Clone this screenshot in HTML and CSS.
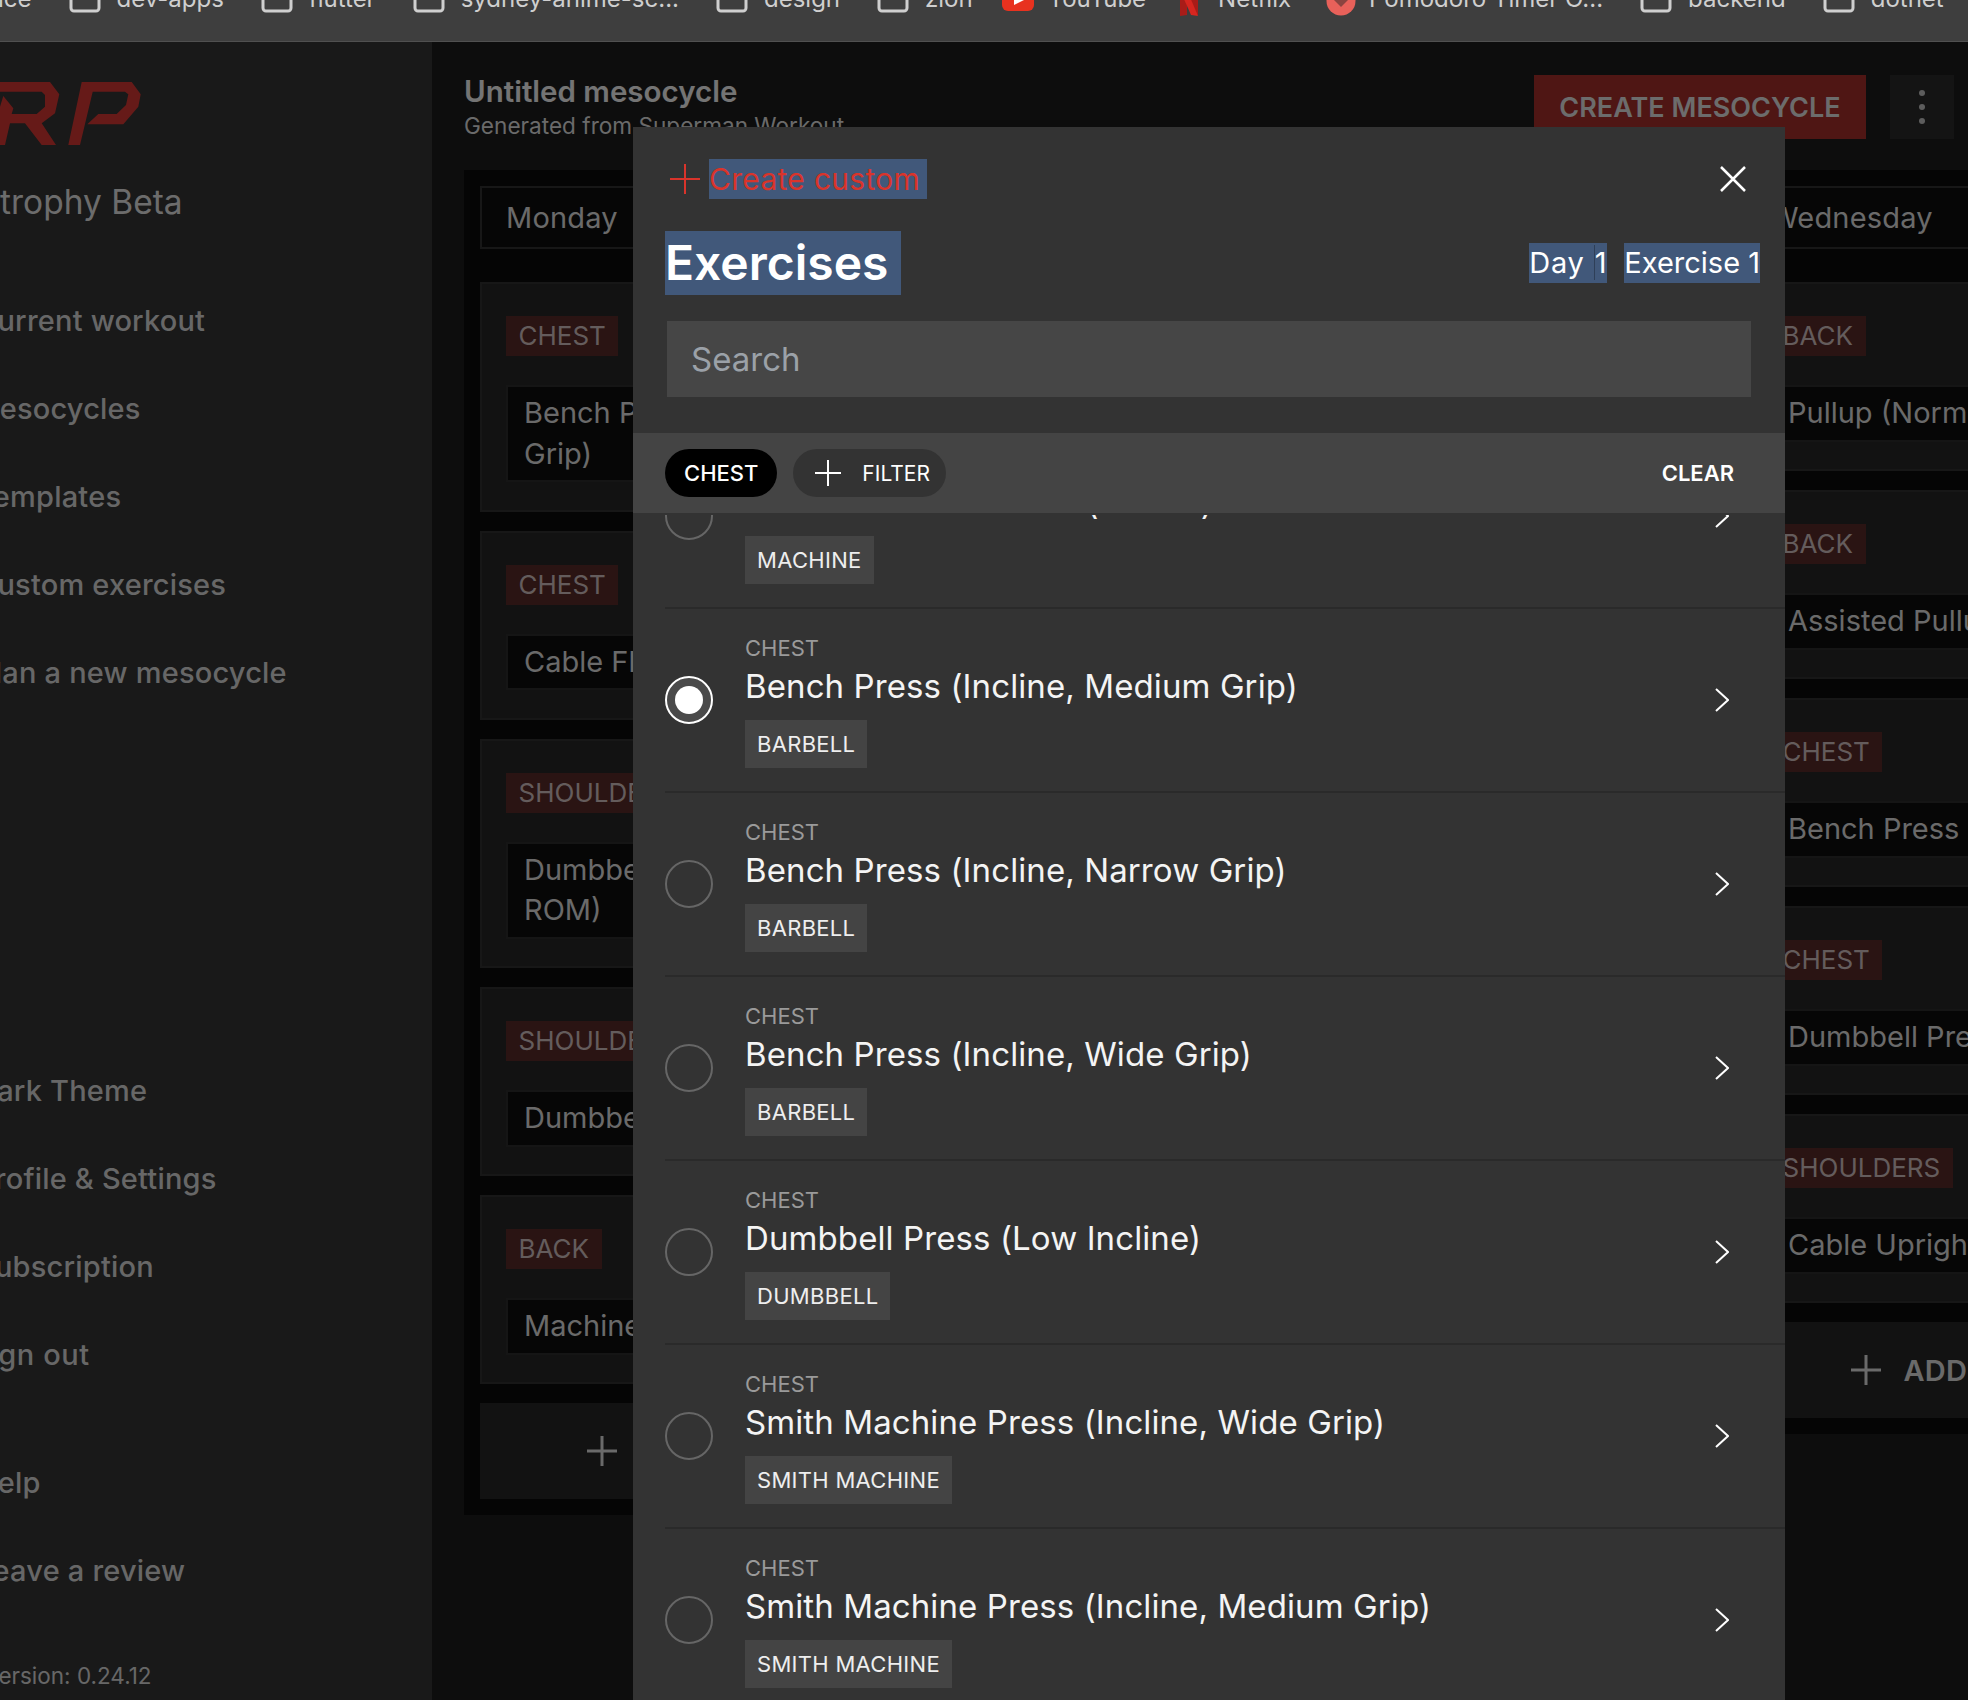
FILE: index.html
```html
<!DOCTYPE html>
<html lang="en">
<head>
  <meta charset="UTF-8" />
  <title>RP Hypertrophy Beta</title>
  <link rel="stylesheet" href="styles.css">
</head>
<body>

  <div class="bookmarks">
    <span class="bm-text bm-first">ice</span>
    <span class="bm"><svg class="folder" viewBox="0 0 32 26"><rect x="2" y="-6" width="28" height="30" rx="3"/></svg><span class="bm-text">dev-apps</span></span>
    <span class="bm"><svg class="folder" viewBox="0 0 32 26"><rect x="2" y="-6" width="28" height="30" rx="3"/></svg><span class="bm-text">flutter</span></span>
    <span class="bm"><svg class="folder" viewBox="0 0 32 26"><rect x="2" y="-6" width="28" height="30" rx="3"/></svg><span class="bm-text">sydney-anime-sc...</span></span>
    <span class="bm"><svg class="folder" viewBox="0 0 32 26"><rect x="2" y="-6" width="28" height="30" rx="3"/></svg><span class="bm-text">design</span></span>
    <span class="bm"><svg class="folder" viewBox="0 0 32 26"><rect x="2" y="-6" width="28" height="30" rx="3"/></svg><span class="bm-text">zion</span></span>
    <span class="bm bm-yt"><svg class="favicon" viewBox="0 0 32 26"><rect width="32" height="25" rx="6" fill="#e8321f"/><path d="M12 4 L24 13 L12 19 Z" fill="#fff"/></svg><span class="bm-text">YouTube</span></span>
    <span class="bm bm-netflix"><svg class="favicon-n" viewBox="0 0 18 26"><path d="M0 0 H7 V25 L0 26 Z" fill="#a81c18"/><path d="M11 0 H18 V25 L11 24 Z" fill="#a81c18"/><path d="M0 0 H7 L18 26 L11 25 Z" fill="#d6261f"/></svg><span class="bm-text">Netflix</span></span>
    <span class="bm bm-pomo"><svg class="favicon-p" viewBox="0 0 30 26"><circle cx="15" cy="11" r="14.5" fill="#e8615a"/><path d="M8 10 L15 17 L22 10 Z" fill="#8a4440"/></svg><span class="bm-text">Pomodoro Timer O...</span></span>
    <span class="bm"><svg class="folder" viewBox="0 0 32 26"><rect x="2" y="-6" width="28" height="30" rx="3"/></svg><span class="bm-text">backend</span></span>
    <span class="bm"><svg class="folder" viewBox="0 0 32 26"><rect x="2" y="-6" width="28" height="30" rx="3"/></svg><span class="bm-text">dotnet</span></span>
  </div>

  <div class="app">
    <aside class="sidebar">
      <svg class="logo" viewBox="0 0 141 63">
        <path fill-rule="evenodd" d="M-10 0 H50 L59.3 12.3 L55 31.3 L41.7 41.3 L56 63 H41.7 L25 41.3 H10 L5 63 H-10 Z M-10 9.7 H41.7 L45 13 V24.7 L36.7 32 H11.7 L13.3 26.3 L3.3 14 L0 24.7 H-10 Z"/>
        <path d="M81.7 0 H131.7 L140.7 12.3 L138.3 24.7 L123.3 42.3 H87.3 L98.3 32 H116.7 L126 23 L128.3 12.3 L125 9.7 H92.7 L80 63 H68.3 Z"/>
      </svg>
      <div class="brand">Hypertrophy Beta</div>

      <nav class="nav nav-main">
        <a>Current workout</a>
        <a class="nudge-m">Mesocycles</a>
        <a>Templates</a>
        <a>Custom exercises</a>
        <a>Plan a new mesocycle</a>
      </nav>

      <nav class="nav nav-account">
        <a>Dark Theme</a>
        <a>Profile &amp; Settings</a>
        <a>Subscription</a>
        <a class="nudge-s">Sign out</a>
      </nav>

      <nav class="nav nav-help">
        <a>Help</a>
        <a>Leave a review</a>
      </nav>

      <div class="version">Version: 0.24.12</div>
    </aside>

    <main class="main">
      <header class="main-header">
        <div class="main-title">
          <h1>Untitled mesocycle</h1>
          <p>Generated from Superman Workout</p>
        </div>
        <button class="btn-create">CREATE MESOCYCLE</button>
        <button class="btn-more"><i></i><i></i><i></i></button>
      </header>

      <div class="board">
        <section class="day">
          <div class="day-name">Monday</div>
          <div class="cards">
            <div class="card"><span class="muscle">CHEST</span><div class="exercise">Bench Press (Incline, Medium<br>Grip)</div></div>
            <div class="card"><span class="muscle">CHEST</span><div class="exercise">Cable Flye</div></div>
            <div class="card"><span class="muscle">SHOULDERS</span><div class="exercise">Dumbbell Lateral Raise (Full<br>ROM)</div></div>
            <div class="card"><span class="muscle">SHOULDERS</span><div class="exercise">Dumbbell Front Raise</div></div>
            <div class="card"><span class="muscle">BACK</span><div class="exercise">Machine Row</div></div>
            <div class="add-group"><svg class="plus" viewBox="0 0 32 32"><path d="M16 1 V31 M1 16 H31"/></svg><span>ADD A MUSCLE GROUP</span></div>
          </div>
        </section>

        <section class="day">
          <div class="day-name">Tuesday</div>
        </section>

        <section class="day">
          <div class="day-name">Wednesday</div>
          <div class="cards">
            <div class="card"><span class="muscle">BACK</span><div class="exercise">Pullup (Normal Grip)</div></div>
            <div class="card"><span class="muscle">BACK</span><div class="exercise">Assisted Pullup</div></div>
            <div class="card"><span class="muscle">CHEST</span><div class="exercise">Bench Press (Flat)</div></div>
            <div class="card"><span class="muscle">CHEST</span><div class="exercise">Dumbbell Press</div></div>
            <div class="card"><span class="muscle">SHOULDERS</span><div class="exercise">Cable Upright Row</div></div>
            <div class="add-group"><svg class="plus" viewBox="0 0 32 32"><path d="M16 1 V31 M1 16 H31"/></svg><span>ADD A MUSCLE GROUP</span></div>
          </div>
        </section>
      </div>
    </main>

    <div class="overlay"></div>

    <div class="modal">
      <div class="modal-top">
        <div class="create-custom">
          <svg class="plus-red" viewBox="0 0 30 30"><path d="M15 0 V30 M0 15 H30"/></svg>
          <span class="sel">Create custom</span>
        </div>
        <svg class="close" viewBox="0 0 26 26"><path d="M1 1 L25 25 M25 1 L1 25"/></svg>
      </div>

      <div class="modal-title">
        <h2 class="sel">Exercises</h2>
        <div class="slot">
          <span class="sel sel-day">Day <span class="sel-num">1</span></span>
          <span class="sel">Exercise 1</span>
        </div>
      </div>

      <div class="search">Search</div>

      <div class="filters">
        <span class="pill pill-on">CHEST</span>
        <span class="pill"><svg class="plus-white" viewBox="0 0 26 26"><path d="M13 0 V26 M0 13 H26"/></svg>FILTER</span>
        <span class="clear">CLEAR</span>
      </div>

      <div class="list">
        <div class="list-inner">
          <div class="row">
            <span class="radio"></span>
            <div class="row-body">
              <div class="row-muscle">CHEST</div>
              <div class="row-name">Machine Chest Press (Incline)</div>
              <span class="row-type">MACHINE</span>
            </div>
            <svg class="chev" viewBox="0 0 14 24"><path d="M1 1 L13 12 L1 23"/></svg>
          </div>
          <div class="row">
            <span class="radio radio-on"></span>
            <div class="row-body">
              <div class="row-muscle">CHEST</div>
              <div class="row-name">Bench Press (Incline, Medium Grip)</div>
              <span class="row-type">BARBELL</span>
            </div>
            <svg class="chev" viewBox="0 0 14 24"><path d="M1 1 L13 12 L1 23"/></svg>
          </div>
          <div class="row">
            <span class="radio"></span>
            <div class="row-body">
              <div class="row-muscle">CHEST</div>
              <div class="row-name">Bench Press (Incline, Narrow Grip)</div>
              <span class="row-type">BARBELL</span>
            </div>
            <svg class="chev" viewBox="0 0 14 24"><path d="M1 1 L13 12 L1 23"/></svg>
          </div>
          <div class="row">
            <span class="radio"></span>
            <div class="row-body">
              <div class="row-muscle">CHEST</div>
              <div class="row-name">Bench Press (Incline, Wide Grip)</div>
              <span class="row-type">BARBELL</span>
            </div>
            <svg class="chev" viewBox="0 0 14 24"><path d="M1 1 L13 12 L1 23"/></svg>
          </div>
          <div class="row">
            <span class="radio"></span>
            <div class="row-body">
              <div class="row-muscle">CHEST</div>
              <div class="row-name">Dumbbell Press (Low Incline)</div>
              <span class="row-type">DUMBBELL</span>
            </div>
            <svg class="chev" viewBox="0 0 14 24"><path d="M1 1 L13 12 L1 23"/></svg>
          </div>
          <div class="row">
            <span class="radio"></span>
            <div class="row-body">
              <div class="row-muscle">CHEST</div>
              <div class="row-name">Smith Machine Press (Incline, Wide Grip)</div>
              <span class="row-type">SMITH MACHINE</span>
            </div>
            <svg class="chev" viewBox="0 0 14 24"><path d="M1 1 L13 12 L1 23"/></svg>
          </div>
          <div class="row">
            <span class="radio"></span>
            <div class="row-body">
              <div class="row-muscle">CHEST</div>
              <div class="row-name">Smith Machine Press (Incline, Medium Grip)</div>
              <span class="row-type">SMITH MACHINE</span>
            </div>
            <svg class="chev" viewBox="0 0 14 24"><path d="M1 1 L13 12 L1 23"/></svg>
          </div>
        </div>
      </div>
    </div>
  </div>

</body>
</html>
```

FILE: styles.css
```css
* {
  box-sizing: border-box;
}

html, body {
  margin: 0;
  height: 1700px;
  overflow: hidden;
}

body {
  display: flex;
  flex-direction: column;
  font-family: Inter, "Noto Sans", sans-serif;
  background: #1a1a1a;
}

/* browser bookmarks bar, cut off at the top of the shot */
.bookmarks {
  flex: none;
  height: 42px;
  display: flex;
  align-items: flex-start;
  gap: 37px;
  background: #3e3e3e;
  border-bottom: 1px solid #505050;
  overflow: hidden;
  white-space: nowrap;
}

.bm {
  display: flex;
  align-items: flex-start;
  gap: 16px;
  flex: none;
}

.bm-yt {
  gap: 14px;
  margin-left: -8px;
}

.bm-netflix {
  gap: 20px;
  margin-left: -3px;
}

.bm-pomo {
  gap: 13px;
  margin-left: -2px;
}

.bm-text {
  display: block;
  margin-top: -17px;
  font-size: 24px;
  line-height: 32px;
  color: #cfcfcf;
}

.bm-first {
  margin-left: -2px;
}

.folder {
  width: 32px;
  height: 26px;
  margin-top: -13px;
  flex: none;
}

.folder rect {
  fill: none;
  stroke: #cfcfcf;
  stroke-width: 3;
}

.favicon {
  width: 32px;
  height: 26px;
  margin-top: -14px;
  flex: none;
}

.favicon-n {
  width: 18px;
  height: 26px;
  margin-top: -10px;
  flex: none;
}

.favicon-p {
  width: 30px;
  height: 26px;
  margin-top: -10px;
  flex: none;
}

.app {
  position: relative;
  flex: 1;
  display: flex;
  min-height: 0;
  overflow: hidden;
}

/* page under the dialog: real colours, dimmed by .overlay */
.sidebar {
  flex: none;
  width: 432px;
  height: 100%;
  background: #323232;
  color: #cfcfcf;
}

.logo {
  display: block;
  width: 141px;
  height: 63px;
  margin-top: 40px;
  overflow: visible;
  fill: #cc3530;
}

.brand {
  margin: 36px 0 0 -97px;
  font-size: 33.5px;
  line-height: 42px;
  color: #d8d8d8;
}

.nav {
  display: flex;
  flex-direction: column;
  margin-left: -24px;
}

.nav a {
  display: block;
  font-size: 29px;
  font-weight: 500;
  letter-spacing: 0.2px;
  line-height: 88px;
}

.nav .nudge-m {
  margin-left: -3px;
}

.nav .nudge-s {
  margin-left: -5px;
  letter-spacing: 0.6px;
}

.nav-main {
  margin-top: 54px;
}

.nav-account {
  margin-top: 330px;
}

.nav-help {
  margin-top: 40px;
}

.version {
  margin: 45px 0 0 -16px;
  font-size: 22.5px;
  line-height: 32px;
}

.main {
  flex: 1;
  min-width: 0;
  background: #1a1a1a;
  color: #d4d4d4;
}

.main-header {
  display: flex;
  align-items: flex-start;
  gap: 24px;
  height: 128px;
  padding: 33px 14px 0 32px;
}

.main-title {
  flex: 1;
}

.main-title h1 {
  margin: 0;
  font-size: 29.5px;
  font-weight: 600;
  line-height: 32px;
  color: #e8e8e8;
}

.main-title p {
  margin: 5px 0 0;
  font-size: 22.6px;
  line-height: 28px;
}

.btn-create {
  width: 332px;
  height: 64px;
  border: none;
  background: #9e2d28;
  color: #d8d8d8;
  font: 600 27px Inter, sans-serif;
}

.btn-more {
  display: flex;
  flex-direction: column;
  align-items: center;
  justify-content: center;
  gap: 8px;
  width: 64px;
  height: 64px;
  border: none;
  background: #282828;
}

.btn-more i {
  width: 6px;
  height: 6px;
  border-radius: 50%;
  background: #bbb;
}

.board {
  display: flex;
  align-items: flex-start;
  padding-left: 32px;
}

.day {
  flex: none;
  width: 632px;
  padding: 16px;
  background: #0a0a0a;
}

.day-name {
  height: 63px;
  padding-left: 24px;
  border: 2px solid #2e2e2e;
  background: #0c0c0c;
  font-size: 29px;
  letter-spacing: 0.2px;
  line-height: 59px;
}

.cards {
  display: flex;
  flex-direction: column;
  gap: 19px;
  margin-top: 33px;
}

.card {
  padding: 32px 24px 27.5px;
  border: 2px solid #2e2e2e;
  background: #242424;
}

.muscle {
  display: inline-block;
  height: 40px;
  padding: 0 12.5px;
  background: #542826;
  color: #c8b8b8;
  font-size: 26px;
  line-height: 40px;
  vertical-align: top;
}

.exercise {
  margin-top: 29px;
  padding: 6px 16px;
  border: 2px solid #2a2a2a;
  background: #0c0c0c;
  font-size: 29px;
  line-height: 40.5px;
  white-space: nowrap;
  overflow: hidden;
}

.add-group {
  display: flex;
  align-items: center;
  justify-content: center;
  gap: 22px;
  height: 96px;
  background: #242424;
  font-size: 29px;
  font-weight: 600;
  letter-spacing: 0.2px;
}

.plus {
  width: 32px;
  height: 32px;
  fill: none;
  stroke: #d4d4d4;
  stroke-width: 3;
}

.overlay {
  position: absolute;
  inset: 0;
  background: rgba(0, 0, 0, 0.5);
}

/* exercise picker dialog */
.modal {
  position: absolute;
  top: 85px;
  left: 633px;
  bottom: 0;
  width: 1152px;
  display: flex;
  flex-direction: column;
  background: #333;
  color: #fff;
}

.sel {
  background: #41587a;
}

.sel-day {
  letter-spacing: 0.8px;
}

.sel-num {
  border-left: 1px solid #2e3f58;
}

.modal-top {
  display: flex;
  align-items: center;
  justify-content: space-between;
  height: 40px;
  margin-top: 32px;
  padding: 0 39px 0 37px;
}

.create-custom {
  display: flex;
  align-items: center;
  gap: 9px;
  color: #d9342b;
  font-size: 30px;
  letter-spacing: 0.3px;
  line-height: 40px;
}

.create-custom .sel {
  padding-right: 7px;
}

.plus-red {
  width: 30px;
  height: 30px;
  fill: none;
  stroke: #d9342b;
  stroke-width: 2;
}

.close {
  width: 26px;
  height: 26px;
  fill: none;
  stroke: #fff;
  stroke-width: 2.5;
}

.modal-title {
  display: flex;
  align-items: center;
  justify-content: space-between;
  margin-top: 32px;
  padding: 0 25px 0 32px;
}

.modal-title h2 {
  margin: 0;
  padding-right: 13px;
  font-size: 48px;
  font-weight: 600;
  line-height: 64px;
}

.slot {
  display: flex;
  gap: 17px;
  font-size: 29px;
  line-height: 40px;
}

.search {
  height: 76px;
  margin: 26px 34px 0;
  padding-left: 24px;
  background: #464646;
  color: #9ba1a8;
  font-size: 33px;
  line-height: 76px;
}

.filters {
  flex: none;
  display: flex;
  align-items: center;
  gap: 16px;
  height: 80px;
  margin-top: 36px;
  padding: 0 51px 0 32px;
  background: #444;
}

.pill {
  display: flex;
  align-items: center;
  gap: 21px;
  height: 48px;
  padding: 0 16px 0 22px;
  border-radius: 24px;
  background: #333;
  font-size: 21px;
}

.pill-on {
  padding: 0 19px;
  background: #000;
  font-size: 22px;
  font-weight: 500;
}

.plus-white {
  width: 26px;
  height: 26px;
  fill: none;
  stroke: #fff;
  stroke-width: 2;
}

.clear {
  margin-left: auto;
  font-size: 22px;
  font-weight: 600;
}

.list {
  flex: 1;
  min-height: 0;
  margin-top: 2px;
  overflow: hidden;
}

.list-inner {
  margin: -90px 0 0 32px;
}

.row {
  display: flex;
  align-items: center;
  height: 184px;
  padding: 24px 56px 25px 0;
  border-bottom: 2px solid #2a2a2a;
}

.radio {
  flex: none;
  width: 48px;
  height: 48px;
  border: 2px solid #666;
  border-radius: 50%;
}

.radio-on {
  display: flex;
  align-items: center;
  justify-content: center;
  border-color: #fff;
  background: #4a4a4a;
}

.radio-on::after {
  content: "";
  width: 28px;
  height: 28px;
  border-radius: 50%;
  background: #fff;
}

.row-body {
  flex: 1;
  align-self: flex-start;
  margin: 1px 0 0 32px;
}

.row-muscle {
  font-size: 22px;
  line-height: 28px;
  color: #9a9a9a;
}

.row-name {
  margin-bottom: 2px;
  font-size: 33px;
  letter-spacing: 0.1px;
  line-height: 48px;
  color: #f4f4f4;
}

.row-type {
  display: inline-block;
  height: 48px;
  margin-top: 8px;
  padding: 0 12px;
  background: #444;
  font-size: 22px;
  letter-spacing: 0.3px;
  line-height: 48px;
  color: #eee;
  vertical-align: top;
}

.chev {
  flex: none;
  width: 14px;
  height: 24px;
  fill: none;
  stroke: #fff;
  stroke-width: 2;
}
```
